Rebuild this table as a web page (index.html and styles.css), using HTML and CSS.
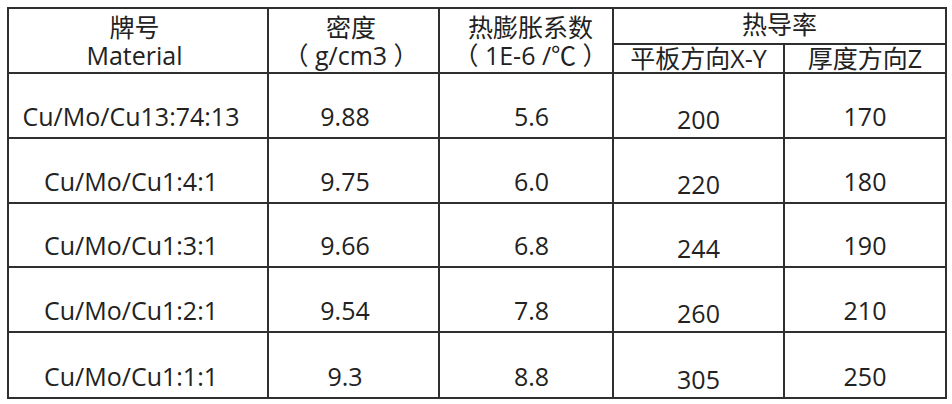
FILE: index.html
```html
<!DOCTYPE html>
<html lang="zh-CN">
<head>
<meta charset="utf-8">
<title>Cu/Mo/Cu 材料参数</title>
<link rel="stylesheet" href="styles.css">
</head>
<body>
<div class="sheet" role="table">
  <div class="cell head span-rows c1" role="columnheader"><span>牌号</span><span>Material</span></div>
  <div class="cell head span-rows c2" role="columnheader"><span>密度</span><span>（ g/cm3 ）</span></div>
  <div class="cell head span-rows c3" role="columnheader"><span>热膨胀系数</span><span>（ 1E-6 /℃ ）</span></div>
  <div class="cell head group" role="columnheader">热导率</div>
  <div class="cell head sub" role="columnheader">平板方向X-Y</div>
  <div class="cell head sub" role="columnheader">厚度方向Z</div>

  <div class="cell val c1" role="cell">Cu/Mo/Cu13:74:13</div>
  <div class="cell val c2" role="cell">9.88</div>
  <div class="cell val c3" role="cell">5.6</div>
  <div class="cell val c4" role="cell">200</div>
  <div class="cell val c5" role="cell">170</div>

  <div class="cell val c1" role="cell">Cu/Mo/Cu1:4:1</div>
  <div class="cell val c2" role="cell">9.75</div>
  <div class="cell val c3" role="cell">6.0</div>
  <div class="cell val c4" role="cell">220</div>
  <div class="cell val c5" role="cell">180</div>

  <div class="cell val c1" role="cell">Cu/Mo/Cu1:3:1</div>
  <div class="cell val c2" role="cell">9.66</div>
  <div class="cell val c3" role="cell">6.8</div>
  <div class="cell val c4" role="cell">244</div>
  <div class="cell val c5" role="cell">190</div>

  <div class="cell val c1" role="cell">Cu/Mo/Cu1:2:1</div>
  <div class="cell val c2" role="cell">9.54</div>
  <div class="cell val c3" role="cell">7.8</div>
  <div class="cell val c4" role="cell">260</div>
  <div class="cell val c5" role="cell">210</div>

  <div class="cell val c1" role="cell">Cu/Mo/Cu1:1:1</div>
  <div class="cell val c2" role="cell">9.3</div>
  <div class="cell val c3" role="cell">8.8</div>
  <div class="cell val c4" role="cell">305</div>
  <div class="cell val c5" role="cell">250</div>
</div>
</body>
</html>
```

FILE: styles.css
```css
html, body {
  margin: 0;
  padding: 0;
  background: #ffffff;
}

body {
  font-family: "Open Sans", "Noto Sans CJK SC", sans-serif;
  font-size: 25px;
  color: #222222;
}

.sheet {
  display: grid;
  grid-template-columns: 258px 169px 172px 169px 160px;
  grid-template-rows: 34px 27px 63px 63px 62px 63px 64px;
  gap: 2px;
  padding: 2px;
  background: #2f2f2f;
  width: max-content;
  margin: 7px 0 0 7px;
}

.cell {
  background: #ffffff;
  display: flex;
  justify-content: center;
  white-space: nowrap;
}

.head {
  align-items: center;
  line-height: 27px;
}

.span-rows {
  grid-row: 1 / 3;
  flex-direction: column;
  line-height: 28px;
}

.span-rows span {
  display: block;
  text-align: center;
}

.span-rows.c1 { padding-right: 7px; }
.span-rows.c2 { padding-right: 5px; }
.span-rows.c3 { padding-left: 9px; }

.group {
  grid-column: 4 / 6;
  padding-bottom: 4px;
}

.val {
  align-items: flex-end;
  line-height: 34px;
  padding-bottom: 4px;
}

.val.c1 { padding-right: 14px; }
.val.c2 { padding-right: 17px; }
.val.c3 { padding-left: 11px; }
.val.c4 { padding-bottom: 1px; }
```
